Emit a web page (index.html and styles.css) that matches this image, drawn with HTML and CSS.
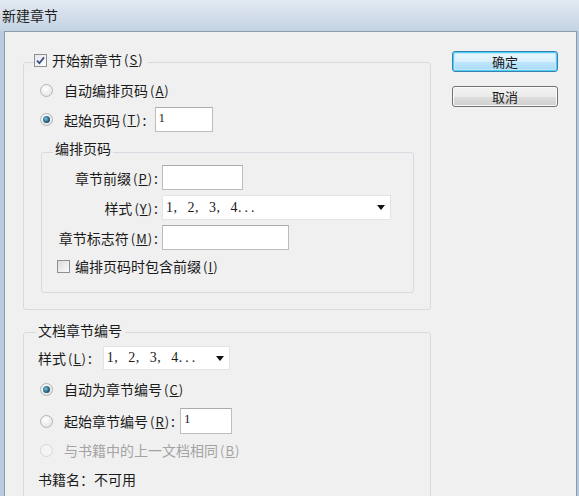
FILE: index.html
```html
<!DOCTYPE html>
<html lang="zh-CN">
<head>
<meta charset="utf-8">
<title>新建章节</title>
<link rel="stylesheet" href="styles.css">
</head>
<body>
<div class="window">
  <div class="titlebar">新建章节</div>
  <div class="client">
    <div class="main">
      <fieldset class="group g1">
        <legend class="legend-check">
          <span class="cb checked"><svg width="13" height="13" viewBox="0 0 13 13"><path d="M3 6.6 L5.4 9.2 L10 3.4" fill="none" stroke="#3a4f8a" stroke-width="1.8"/></svg></span>开始新章节<span class="mn">(<u>S</u>)</span>
        </legend>
        <div class="content c1">
          <div class="row radio-row"><span class="radio"></span>自动编排页码<span class="mn">(<u>A</u>)</span></div>
          <div class="row radio-row r-gap"><span class="radio on"></span>起始页码<span class="mn">(<u>T</u>)</span><span class="colon wide">:</span><span class="input w58">1</span></div>
          <fieldset class="group inner">
            <legend>编排页码</legend>
            <div class="form-grid">
              <span class="lbl">章节前缀<span class="mn">(<u>P</u>)</span><span class="colon2">:</span></span><span class="input w81"></span>
              <span class="lbl">样式<span class="mn">(<u>Y</u>)</span><span class="colon2">:</span></span><span class="select w229"><span class="seltext">1, 2, 3, 4<span class="dots">...</span></span><span class="arrow"></span></span>
              <span class="lbl">章节标志符<span class="mn">(<u>M</u>)</span><span class="colon2">:</span></span><span class="input w127"></span>
            </div>
            <div class="check-row"><span class="cb"></span>编排页码时包含前缀<span class="mn">(<u>I</u>)</span></div>
          </fieldset>
        </div>
      </fieldset>

      <fieldset class="group g2">
        <legend>文档章节编号</legend>
        <div class="content c2">
          <div class="row style-row"><span class="lbl2">样式<span class="mn">(<u>L</u>)</span><span class="colon2">:</span></span><span class="select w127"><span class="seltext">1, 2, 3, 4<span class="dots">...</span></span><span class="arrow"></span></span></div>
          <div class="row radio-row g2r1"><span class="radio on"></span>自动为章节编号<span class="mn">(<u>C</u>)</span></div>
          <div class="row radio-row g2r2"><span class="radio"></span>起始章节编号<span class="mn">(<u>R</u>)</span><span class="colon">:</span><span class="input w52">1</span></div>
          <div class="row radio-row g2r3 disabled"><span class="radio dis"></span>与书籍中的上一文档相同<span class="mn">(<u>B</u>)</span></div>
          <div class="row book-row">书籍名：不可用</div>
        </div>
      </fieldset>
    </div>
    <div class="buttons">
      <button class="btn default">确定</button>
      <button class="btn">取消</button>
    </div>
  </div>
</div>
</body>
</html>
```

FILE: styles.css
```css
* { box-sizing: border-box; }
html, body { margin: 0; padding: 0; }
body {
  width: 579px;
  height: 496px;
  overflow: hidden;
  font-family: "Noto Sans CJK SC", "Microsoft YaHei", sans-serif;
  font-size: 14px;
  color: #1b1b1b;
  background: #c3d2e2;
}
.window {
  width: 579px;
  height: 496px;
  display: flex;
  flex-direction: column;
  background: linear-gradient(90deg, #b9cbdf, #c8d6e5 50%, #b6c8db);
}
.titlebar {
  height: 31px;
  line-height: 30px;
  padding-left: 2px;
  font-size: 14px;
  color: #1e1e1e;
  background: linear-gradient(#e2e9f1, #d2dde9 55%, #c4d3e3);
}
.client {
  flex: 1;
  margin: 0 2px 0 4px;
  border: 1px solid #8d9bab;
  border-bottom: none;
  background: #f0f0f0;
  display: flex;
  align-items: flex-start;
  padding: 19px 0 0 18px;
  overflow: hidden;
}
.main { width: 408px; flex: none; }

.group {
  margin: 0;
  padding: 0;
  border: 1px solid #d5dbe0;
  border-radius: 3px;
  min-width: 0;
}
.group legend {
  line-height: 18px;
  padding: 0 3px 4px 2px;
  margin-left: 12px;
}
.g1 legend.legend-check {
  margin-left: 10px;
  padding: 0 4px 4px 0;
  display: flex;
  align-items: center;
}
.mn { font-size: 13px; margin-left: 2px; letter-spacing: 1px; }
.mn u { text-decoration: underline; }

.cb {
  width: 13px;
  height: 13px;
  border: 1px solid #8e8f8f;
  background: linear-gradient(135deg, #dcdcdc, #fbfbfb);
  display: inline-block;
  position: relative;
  flex: none;
}
.cb.checked { background: linear-gradient(135deg, #e4e6ee, #fdfdfd); margin-right: 5px; }
.cb svg { position: absolute; left: -1px; top: -1px; }

.content.c1 { padding: 5px 16px 16px 16px; }
.row { display: flex; align-items: center; white-space: nowrap; }
.radio-row { height: 24px; }
.r-gap { height: 25px; margin-top: 5px; }
.radio {
  width: 13px;
  height: 13px;
  border-radius: 50%;
  border: 1px solid #b4b4b4;
  background: radial-gradient(circle at 40% 35%, #ffffff, #dedede);
  margin-right: 11px;
  flex: none;
  position: relative;
}
.radio.on::after {
  content: "";
  position: absolute;
  left: 2px;
  top: 2px;
  width: 7px;
  height: 7px;
  border-radius: 50%;
  background: radial-gradient(circle at 40% 40%, #7fc6e6, #27607f 55%, #163c50);
}
.radio.dis { border-color: #d6d6d6; background: #f4f4f4; }
.disabled { color: #a3a3a3; }
.colon { margin: 0 5px 0 1px; }
.colon.wide { margin-right: 8px; }
.colon2 { margin-left: 1px; }

.input {
  display: inline-block;
  height: 25px;
  background: #fff;
  border: 1px solid #bdbdbd;
  border-top-color: #a9abb0;
  font-family: "Liberation Serif", serif;
  font-size: 13px;
  line-height: 16px;
  padding: 2px 3px;
}
.w58 { width: 58px; }
.w81 { width: 81px; }
.w127 { width: 127px; }
.w52 { width: 52px; height: 26px; }

.select {
  display: inline-flex;
  align-items: center;
  justify-content: space-between;
  height: 25px;
  background: #fff;
  border: 1px solid #e4e4e4;
  padding: 0 5px 0 3px;
  font-family: "Liberation Serif", serif;
  font-size: 14px;
}
.select.w229 { width: 229px; }
.select.w127 { width: 127px; height: 24px; }
.seltext { word-spacing: 6px; letter-spacing: 0.5px; }
.dots { letter-spacing: 3px; }
.arrow {
  width: 0;
  height: 0;
  border-left: 4px solid transparent;
  border-right: 4px solid transparent;
  border-top: 5px solid #111;
}

.group.inner { margin: 7px 0 0 1px; }
.group.inner legend { margin-left: 11px; padding: 0 2px 8px 2px; }
.form-grid {
  display: grid;
  grid-template-columns: 104px auto;
  column-gap: 4px;
  row-gap: 5px;
  padding-left: 12px;
  justify-items: start;
  align-items: center;
}
.form-grid .lbl { justify-self: end; white-space: nowrap; }
.check-row {
  display: flex;
  align-items: center;
  height: 18px;
  margin: 7px 0 17px 15px;
  white-space: nowrap;
}
.check-row .cb { margin-right: 5px; }

.g2 { margin-top: 11px; }
.content.c2 { padding: 3px 16px 30px 14px; }
.style-row { height: 24px; }
.lbl2 { margin-right: 11px; }
.g2r1 { margin-top: 7px; padding-left: 2px; }
.g2r2 { margin-top: 7px; height: 26px; padding-left: 2px; }
.g2r3 { margin-top: 4px; padding-left: 2px; }
.book-row { margin-top: 5px; height: 24px; }

.buttons {
  display: flex;
  flex-direction: column;
  margin-left: 21px;
  gap: 14px;
}
.btn {
  width: 106px;
  height: 21px;
  border: 1px solid #707070;
  border-radius: 3px;
  background: linear-gradient(#f2f2f2, #ebebeb 50%, #dddddd 51%, #cfcfcf);
  font-family: "Noto Sans CJK SC", sans-serif;
  font-size: 13px;
  color: #1b1b1b;
  padding: 0;
  line-height: 18px;
  box-shadow: inset 0 0 0 1px #fbfbfb;
}
.btn.default {
  border-color: #3c7fb1;
  box-shadow: inset 0 0 0 1px #48d0f6, inset 0 0 0 2px #c4e8f8;
  background: linear-gradient(#eaf6fd, #d9f0fc 50%, #bee6fd 51%, #a7d9f5);
}
```
